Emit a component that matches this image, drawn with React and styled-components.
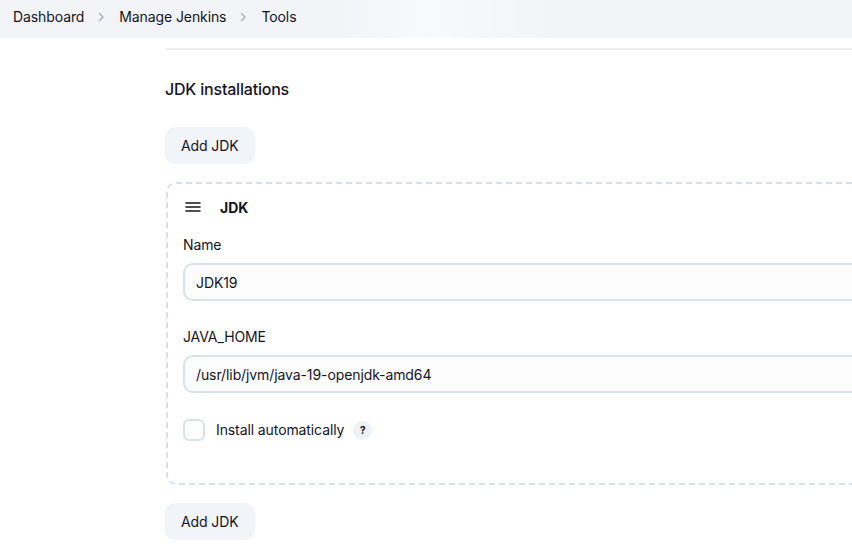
import React from "react";
import styled, { createGlobalStyle } from "styled-components";

const GlobalStyle = createGlobalStyle`
  html, body {
    margin: 0;
    padding: 0;
    background: #ffffff;
    overflow: hidden;
  }
  body {
    font-family: Inter, "Noto Sans", "Liberation Sans", sans-serif;
    color: #14141f;
    font-size: 14px;
  }
`;

export default function App() {
	return (
		<>
			<GlobalStyle />
			<Breadcrumbs>
				<Crumb>Dashboard</Crumb>
				<Chevron />
				<Crumb>Manage Jenkins</Crumb>
				<Chevron />
				<Crumb>Tools</Crumb>
			</Breadcrumbs>
			<Main>
				<Divider />
				<SectionTitle>JDK installations</SectionTitle>
				<AddButton>Add JDK</AddButton>
				<Repeated>
					<RepeatedHeader>
						<DragHandle />
						<RepeatedTitle>JDK</RepeatedTitle>
					</RepeatedHeader>
					<Field>
						<Label>Name</Label>
						<TextInput defaultValue="JDK19" />
					</Field>
					<Field>
						<Label>JAVA_HOME</Label>
						<TextInput defaultValue="/usr/lib/jvm/java-19-openjdk-amd64" />
					</Field>
					<CheckRow>
						<Checkbox />
						<CheckLabel>Install automatically</CheckLabel>
						<HelpBadge>?</HelpBadge>
					</CheckRow>
				</Repeated>
				<AddButton $top={18}>Add JDK</AddButton>
			</Main>
		</>
	);
}

function Chevron() {
	return (
		<ChevronIcon width="10" height="10" viewBox="0 0 10 10">
			<path d="M3.5 1.5 L7 5 L3.5 8.5" fill="none" stroke="#a3acb9" strokeWidth="1.3" strokeLinecap="round" strokeLinejoin="round" />
		</ChevronIcon>
	);
}

function DragHandle() {
	return (
		<HandleIcon width="16" height="12" viewBox="0 0 16 12">
			<path d="M1 2 H15 M1 6 H15 M1 10 H15" stroke="#14141f" strokeWidth="1.6" strokeLinecap="round" />
		</HandleIcon>
	);
}

const Breadcrumbs = styled.nav`
  height: 38px;
  box-sizing: border-box;
  padding: 0 0 4px 13px;
  display: flex;
  align-items: center;
  background: linear-gradient(90deg, #f2f4f7 0%, #f2f4f7 40%, #f8f9fa 50%, #f3f4f7 65%, #f2f4f7 100%);
`;

const Crumb = styled.span`
  font-size: 14px;
  color: #14141f;
  line-height: 20px;
  letter-spacing: -0.1px;
`;

const ChevronIcon = styled.svg`
  margin: 0 13px 0 12px;
  flex-shrink: 0;
`;

const Main = styled.main`
  padding-left: 165px;
  width: 900px;
`;

const Divider = styled.div`
  margin-top: 10px;
  height: 2px;
  background: #eef0f3;
`;

const SectionTitle = styled.h2`
  margin: 29px 0 0;
  font-size: 16px;
  font-weight: 500;
  line-height: 20px;
  letter-spacing: -0.2px;
  color: #14141f;
`;

const AddButton = styled.button`
  display: block;
  margin-top: ${(p) => (p.$top != null ? p.$top : 28)}px;
  height: 37px;
  padding: 0 16px;
  border: none;
  border-radius: 10px;
  background: #f1f4f8;
  font-family: inherit;
  font-size: 14px;
  font-weight: 400;
  letter-spacing: -0.1px;
  color: #14141f;
`;

const Repeated = styled.div`
  margin-top: 18px;
  margin-left: 1px;
  height: 303px;
  box-sizing: border-box;
  border: 2px dashed #d9dfe8;
  border-radius: 10px;
  padding: 13px 0 0 15px;
`;

const RepeatedHeader = styled.div`
  display: flex;
  align-items: center;
  height: 20px;
`;

const HandleIcon = styled.svg`
  margin-left: 2px;
  margin-right: 19px;
`;

const RepeatedTitle = styled.span`
  font-size: 14px;
  font-weight: 700;
`;

const Field = styled.div`
  margin-top: 18px;
  display: flex;
  flex-direction: column;
  & + & {
    margin-top: 26px;
  }
`;

const Label = styled.label`
  font-size: 14px;
  line-height: 20px;
  margin-bottom: 8px;
  font-weight: 400;
  letter-spacing: -0.1px;
`;

const TextInput = styled.input`
  height: 38px;
  box-sizing: border-box;
  border: 2px solid #dbe1ea;
  border-radius: 10px;
  background: #fcfcfd;
  padding: 0 11px;
  font-family: inherit;
  font-size: 14px;
  letter-spacing: -0.1px;
  color: #14141f;
  outline: none;
`;

const CheckRow = styled.div`
  margin-top: 26px;
  display: flex;
  align-items: center;
`;

const Checkbox = styled.span`
  width: 22px;
  height: 22px;
  box-sizing: border-box;
  border: 2px solid #dbe1ea;
  border-radius: 6px;
  background: #ffffff;
  margin-right: 11px;
`;

const CheckLabel = styled.span`
  font-size: 14px;
  font-weight: 400;
  line-height: 20px;
  letter-spacing: -0.1px;
`;

const HelpBadge = styled.span`
  margin-left: 9px;
  width: 19px;
  height: 19px;
  border-radius: 50%;
  background: #eef1f5;
  display: flex;
  align-items: center;
  justify-content: center;
  font-size: 10px;
  font-weight: 700;
`;
